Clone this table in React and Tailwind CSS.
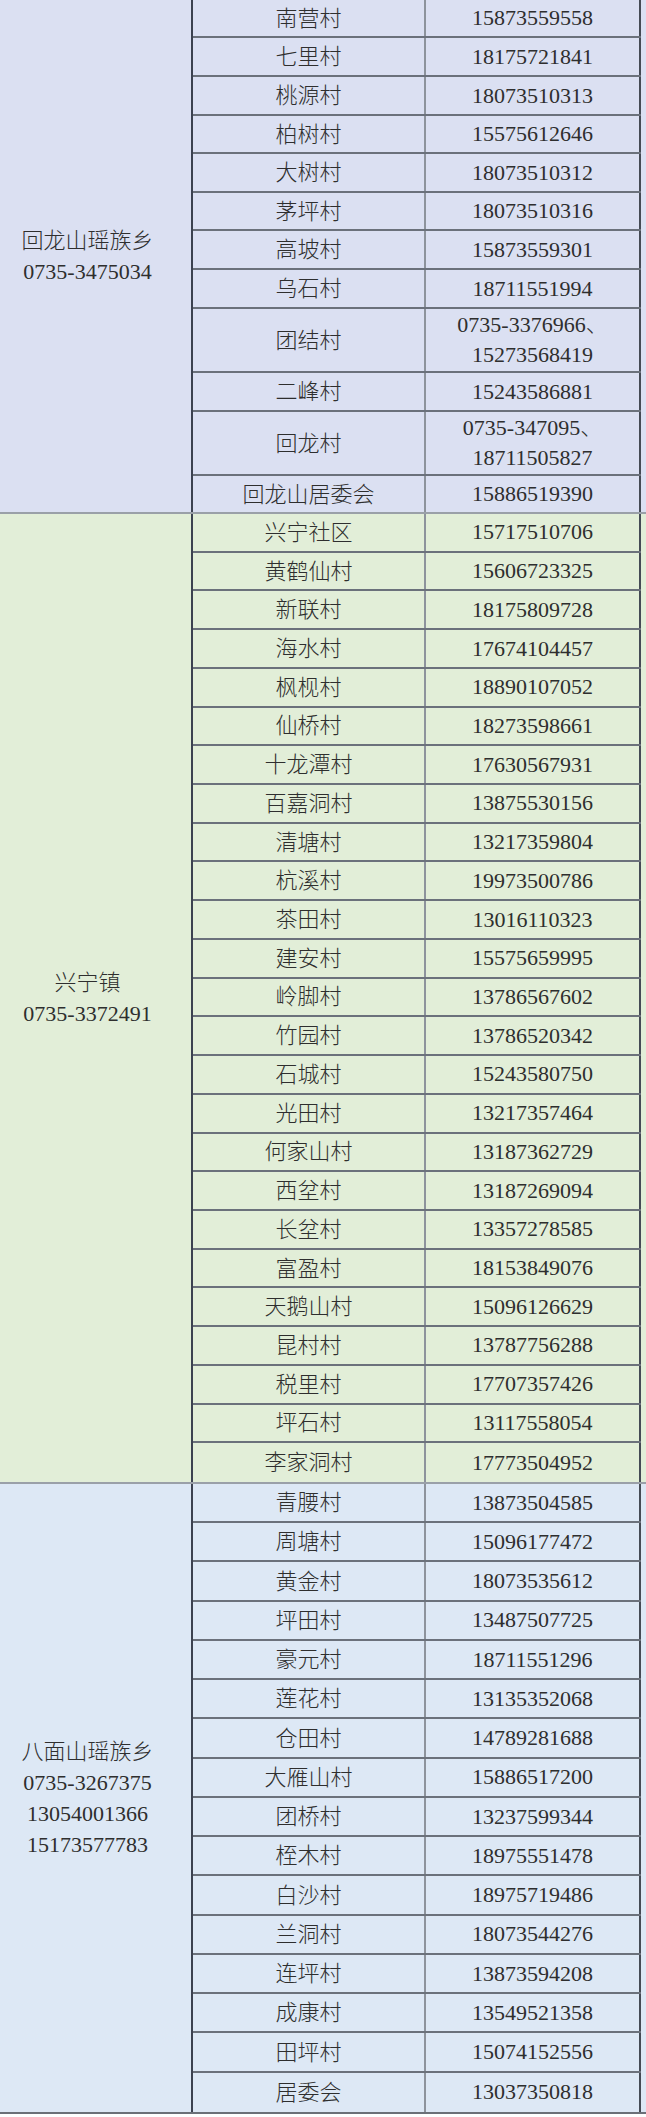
const GROUPS = [
  {
    label: ["回龙山瑶族乡", "0735-3475034"],
    bg: "bg-[#dbe0f2]",
    rows: [
      ["南营村", ["15873559558"], "h-[38px]"],
      ["七里村", ["18175721841"], "h-[39px]"],
      ["桃源村", ["18073510313"], "h-[39px]"],
      ["柏树村", ["15575612646"], "h-[38px]"],
      ["大树村", ["18073510312"], "h-[39px]"],
      ["茅坪村", ["18073510316"], "h-[38px]"],
      ["高坡村", ["15873559301"], "h-[39px]"],
      ["乌石村", ["18711551994"], "h-[39px]"],
      ["团结村", ["0735-3376966、", "15273568419"], "h-[64px]"],
      ["二峰村", ["15243586881"], "h-[39px]"],
      ["回龙村", ["0735-347095、", "18711505827"], "h-[64px]"],
      ["回龙山居委会", ["15886519390"], "h-[36px]"],
    ],
  },
  {
    label: ["兴宁镇", "0735-3372491"],
    bg: "bg-[#e2eed8]",
    rowH: "h-[38.72px]",
    rows: [
      ["兴宁社区", "15717510706"],
      ["黄鹤仙村", "15606723325"],
      ["新联村", "18175809728"],
      ["海水村", "17674104457"],
      ["枫枧村", "18890107052"],
      ["仙桥村", "18273598661"],
      ["十龙潭村", "17630567931"],
      ["百嘉洞村", "13875530156"],
      ["清塘村", "13217359804"],
      ["杭溪村", "19973500786"],
      ["茶田村", "13016110323"],
      ["建安村", "15575659995"],
      ["岭脚村", "13786567602"],
      ["竹园村", "13786520342"],
      ["石城村", "15243580750"],
      ["光田村", "13217357464"],
      ["何家山村", "13187362729"],
      ["西坌村", "13187269094"],
      ["长坌村", "13357278585"],
      ["富盈村", "18153849076"],
      ["天鹅山村", "15096126629"],
      ["昆村村", "13787756288"],
      ["税里村", "17707357426"],
      ["坪石村", "13117558054"],
      ["李家洞村", "17773504952"],
    ],
  },
  {
    label: ["八面山瑶族乡", "0735-3267375", "13054001366", "15173577783"],
    bg: "bg-[#dde8f5]",
    rowH: "h-[39.25px]",
    rows: [
      ["青腰村", "13873504585"],
      ["周塘村", "15096177472"],
      ["黄金村", "18073535612"],
      ["坪田村", "13487507725"],
      ["豪元村", "18711551296"],
      ["莲花村", "13135352068"],
      ["仓田村", "14789281688"],
      ["大雁山村", "15886517200"],
      ["团桥村", "13237599344"],
      ["桎木村", "18975551478"],
      ["白沙村", "18975719486"],
      ["兰洞村", "18073544276"],
      ["连坪村", "13873594208"],
      ["成康村", "13549521358"],
      ["田坪村", "15074152556"],
      ["居委会", "13037350818"],
    ],
  },
];

function Row({ name, phones, h, last }) {
  return (
    <div className={`flex ${h} ${last ? "" : "border-b-2 border-[#6b717b]"}`}>
      <div className="flex w-[233px] items-center justify-center border-r-2 border-[#8d939c]">
        {name}
      </div>
      <div className="flex w-[215px] flex-col items-center justify-center border-r-2 border-[#454b55] leading-[30px]">
        {phones.map((p) => (
          <span key={p}>{p}</span>
        ))}
      </div>
    </div>
  );
}

export default function App() {
  return (
    <div
      className="w-[646px] bg-white pb-[3px] text-[22px] font-light text-[#2e2e2e]"
      style={{ fontFamily: '"Liberation Serif", "Noto Sans CJK SC", serif' }}
    >
      {GROUPS.map((g, gi) => (
        <div
          key={gi}
          className={`flex ${g.bg} ${gi === 2 ? "border-b-2 border-[#6b7078]" : "border-b-2 border-[#9aa0a8]"}`}
        >
          <div className="flex w-[193px] flex-col items-center justify-center border-r-2 border-[#3c4250] pr-4 leading-[31px]">
            {g.label.map((l) => (
              <span key={l}>{l}</span>
            ))}
          </div>
          <div className="flex flex-col">
            {g.rows.map((r, i) => {
              const phones = Array.isArray(r[1]) ? r[1] : [r[1]];
              const h = r[2] || g.rowH;
              return (
                <Row
                  key={r[0] + i}
                  name={r[0]}
                  phones={phones}
                  h={h}
                  last={i === g.rows.length - 1}
                />
              );
            })}
          </div>
        </div>
      ))}
    </div>
  );
}
